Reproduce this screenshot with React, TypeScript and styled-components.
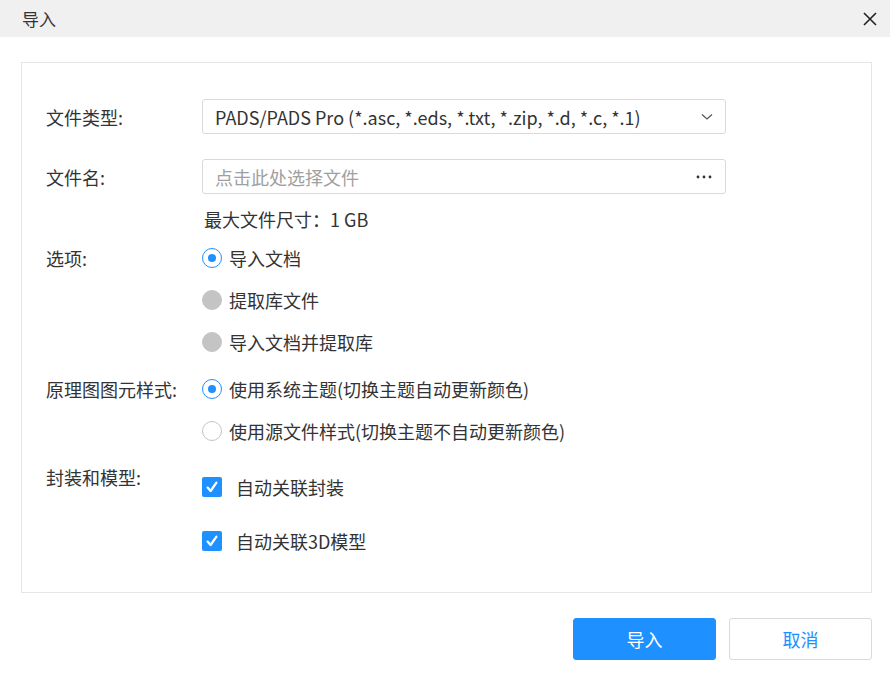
import React from "react";
import styled, { createGlobalStyle } from "styled-components";

const Global = createGlobalStyle`
  html, body {
    margin: 0;
    padding: 0;
    background: #fff;
  }
  body {
    font-family: "Noto Sans CJK SC", "Noto Sans", "Liberation Sans", sans-serif;
    color: #333;
  }
`;

const Dialog = styled.div`
  width: 890px;
  height: 678px;
  background: #fff;
  display: flex;
  flex-direction: column;
`;

const Header = styled.div`
  height: 37px;
  background: #f0f0f0;
  display: flex;
  align-items: center;
  justify-content: space-between;
  padding: 0 13px 0 22px;
  font-size: 17px;
  color: #333;
`;

const CloseButton = styled.button`
  border: none;
  background: none;
  padding: 0;
  width: 14px;
  height: 14px;
  display: flex;
  cursor: pointer;
`;

const Panel = styled.div`
  margin: 25px 18px 0 21px;
  border: 1px solid #e6e6e6;
  padding: 36px 0 24px 24px;
  display: flex;
  flex-direction: column;
`;

const Row = styled.div<{ top?: number }>`
  display: grid;
  grid-template-columns: 156px 524px;
  margin-top: ${(p) => p.top || 0}px;
`;

const Label = styled.div<{ center?: boolean; offset?: number }>`
  font-size: 18px;
  line-height: 24px;
  color: #333;
  align-self: ${(p) => (p.center ? "center" : "start")};
  padding-top: ${(p) => p.offset || 0}px;
`;

const Field = styled.div`
  height: 35px;
  box-sizing: border-box;
  border: 1px solid #d9d9d9;
  border-radius: 3px;
  display: flex;
  align-items: center;
  justify-content: space-between;
  padding: 0 12px 0 12px;
  font-size: 18px;
  cursor: pointer;
`;

const FieldText = styled.span<{ muted?: boolean }>`
  color: ${(p) => (p.muted ? "#a0a0a0" : "#333")};
  white-space: nowrap;
`;

const Hint = styled.div`
  font-size: 18px;
  line-height: 24px;
  padding-left: 2px;
`;

const Group = styled.div<{ item: number }>`
  display: flex;
  flex-direction: column;
  & > * {
    height: ${(p) => p.item}px;
  }
`;

const Option = styled.label<{ gap: number }>`
  display: flex;
  align-items: center;
  gap: ${(p) => p.gap}px;
  font-size: 18px;
  color: #333;
`;

const RadioDot = styled.span<{ state: "on" | "off" | "disabled" }>`
  width: 20px;
  height: 20px;
  box-sizing: border-box;
  border-radius: 50%;
  border: 1px solid ${(p) => (p.state === "on" ? "#1e90ff" : "#c4c4c4")};
  background: ${(p) => (p.state === "disabled" ? "#c4c4c4" : "#fff")};
  display: flex;
  align-items: center;
  justify-content: center;
  flex: none;
  &::after {
    content: "";
    width: 8px;
    height: 8px;
    border-radius: 50%;
    background: #1e90ff;
    display: ${(p) => (p.state === "on" ? "block" : "none")};
  }
`;

const CheckBox = styled.span`
  width: 20px;
  height: 20px;
  border-radius: 2px;
  background: #1e90ff;
  display: flex;
  align-items: center;
  justify-content: center;
  flex: none;
`;

const Footer = styled.div`
  display: flex;
  justify-content: flex-end;
  gap: 13px;
  padding: 25px 18px 0 0;
`;

const Button = styled.button<{ primary?: boolean }>`
  width: 143px;
  height: 42px;
  box-sizing: border-box;
  border-radius: 3px;
  border: 1px solid ${(p) => (p.primary ? "#1e90ff" : "#d9d9d9")};
  background: ${(p) => (p.primary ? "#1e90ff" : "#fff")};
  color: ${(p) => (p.primary ? "#fff" : "#1e90ff")};
  font-family: inherit;
  font-size: 18px;
  cursor: pointer;
`;

function Radio({ state, children }: { state: "on" | "off" | "disabled"; children: React.ReactNode }) {
  return (
    <Option gap={7}>
      <RadioDot state={state} />
      <span>{children}</span>
    </Option>
  );
}

function Check({ children }: { children: React.ReactNode }) {
  return (
    <Option gap={14}>
      <CheckBox>
        <svg width="14" height="14" viewBox="0 0 14 14">
          <path d="M2.6 7.6 L5.6 11 L11.4 2.6" fill="none" stroke="#fff" strokeWidth="2.3" strokeLinecap="round" strokeLinejoin="round" />
        </svg>
      </CheckBox>
      <span>{children}</span>
    </Option>
  );
}

export default function App() {
  return (
    <Dialog>
      <Global />
      <Header>
        <span>导入</span>
        <CloseButton>
          <svg width="14" height="14" viewBox="0 0 14 14">
            <path d="M1 1 L13 13 M13 1 L1 13" stroke="#222" strokeWidth="1.6" />
          </svg>
        </CloseButton>
      </Header>
      <Panel>
        <Row>
          <Label center>文件类型:</Label>
          <Field>
            <FieldText>PADS/PADS Pro (*.asc, *.eds, *.txt, *.zip, *.d, *.c, *.1)</FieldText>
            <svg width="12" height="8" viewBox="0 0 12 8">
              <path d="M1 1.5 L6 6 L11 1.5" fill="none" stroke="#555" strokeWidth="1.2" />
            </svg>
          </Field>
        </Row>
        <Row top={25}>
          <Label center>文件名:</Label>
          <Field>
            <FieldText muted>点击此处选择文件</FieldText>
            <svg width="18" height="4" viewBox="0 0 18 4">
              <circle cx="3" cy="2" r="1.4" fill="#333" />
              <circle cx="9" cy="2" r="1.4" fill="#333" />
              <circle cx="15" cy="2" r="1.4" fill="#333" />
            </svg>
          </Field>
        </Row>
        <Row top={13}>
          <span />
          <Hint>最大文件尺寸：1 GB</Hint>
        </Row>
        <Row top={6}>
          <Label offset={9}>选项:</Label>
          <Group item={42}>
            <Radio state="on">导入文档</Radio>
            <Radio state="disabled">提取库文件</Radio>
            <Radio state="disabled">导入文档并提取库</Radio>
          </Group>
        </Row>
        <Row top={5}>
          <Label offset={9}>原理图图元样式:</Label>
          <Group item={42}>
            <Radio state="on">使用系统主题(切换主题自动更新颜色)</Radio>
            <Radio state="off">使用源文件样式(切换主题不自动更新颜色)</Radio>
          </Group>
        </Row>
        <Row top={8}>
          <Label offset={5}>封装和模型:</Label>
          <Group item={54}>
            <Check>自动关联封装</Check>
            <Check>自动关联3D模型</Check>
          </Group>
        </Row>
      </Panel>
      <Footer>
        <Button primary>导入</Button>
        <Button>取消</Button>
      </Footer>
    </Dialog>
  );
}
